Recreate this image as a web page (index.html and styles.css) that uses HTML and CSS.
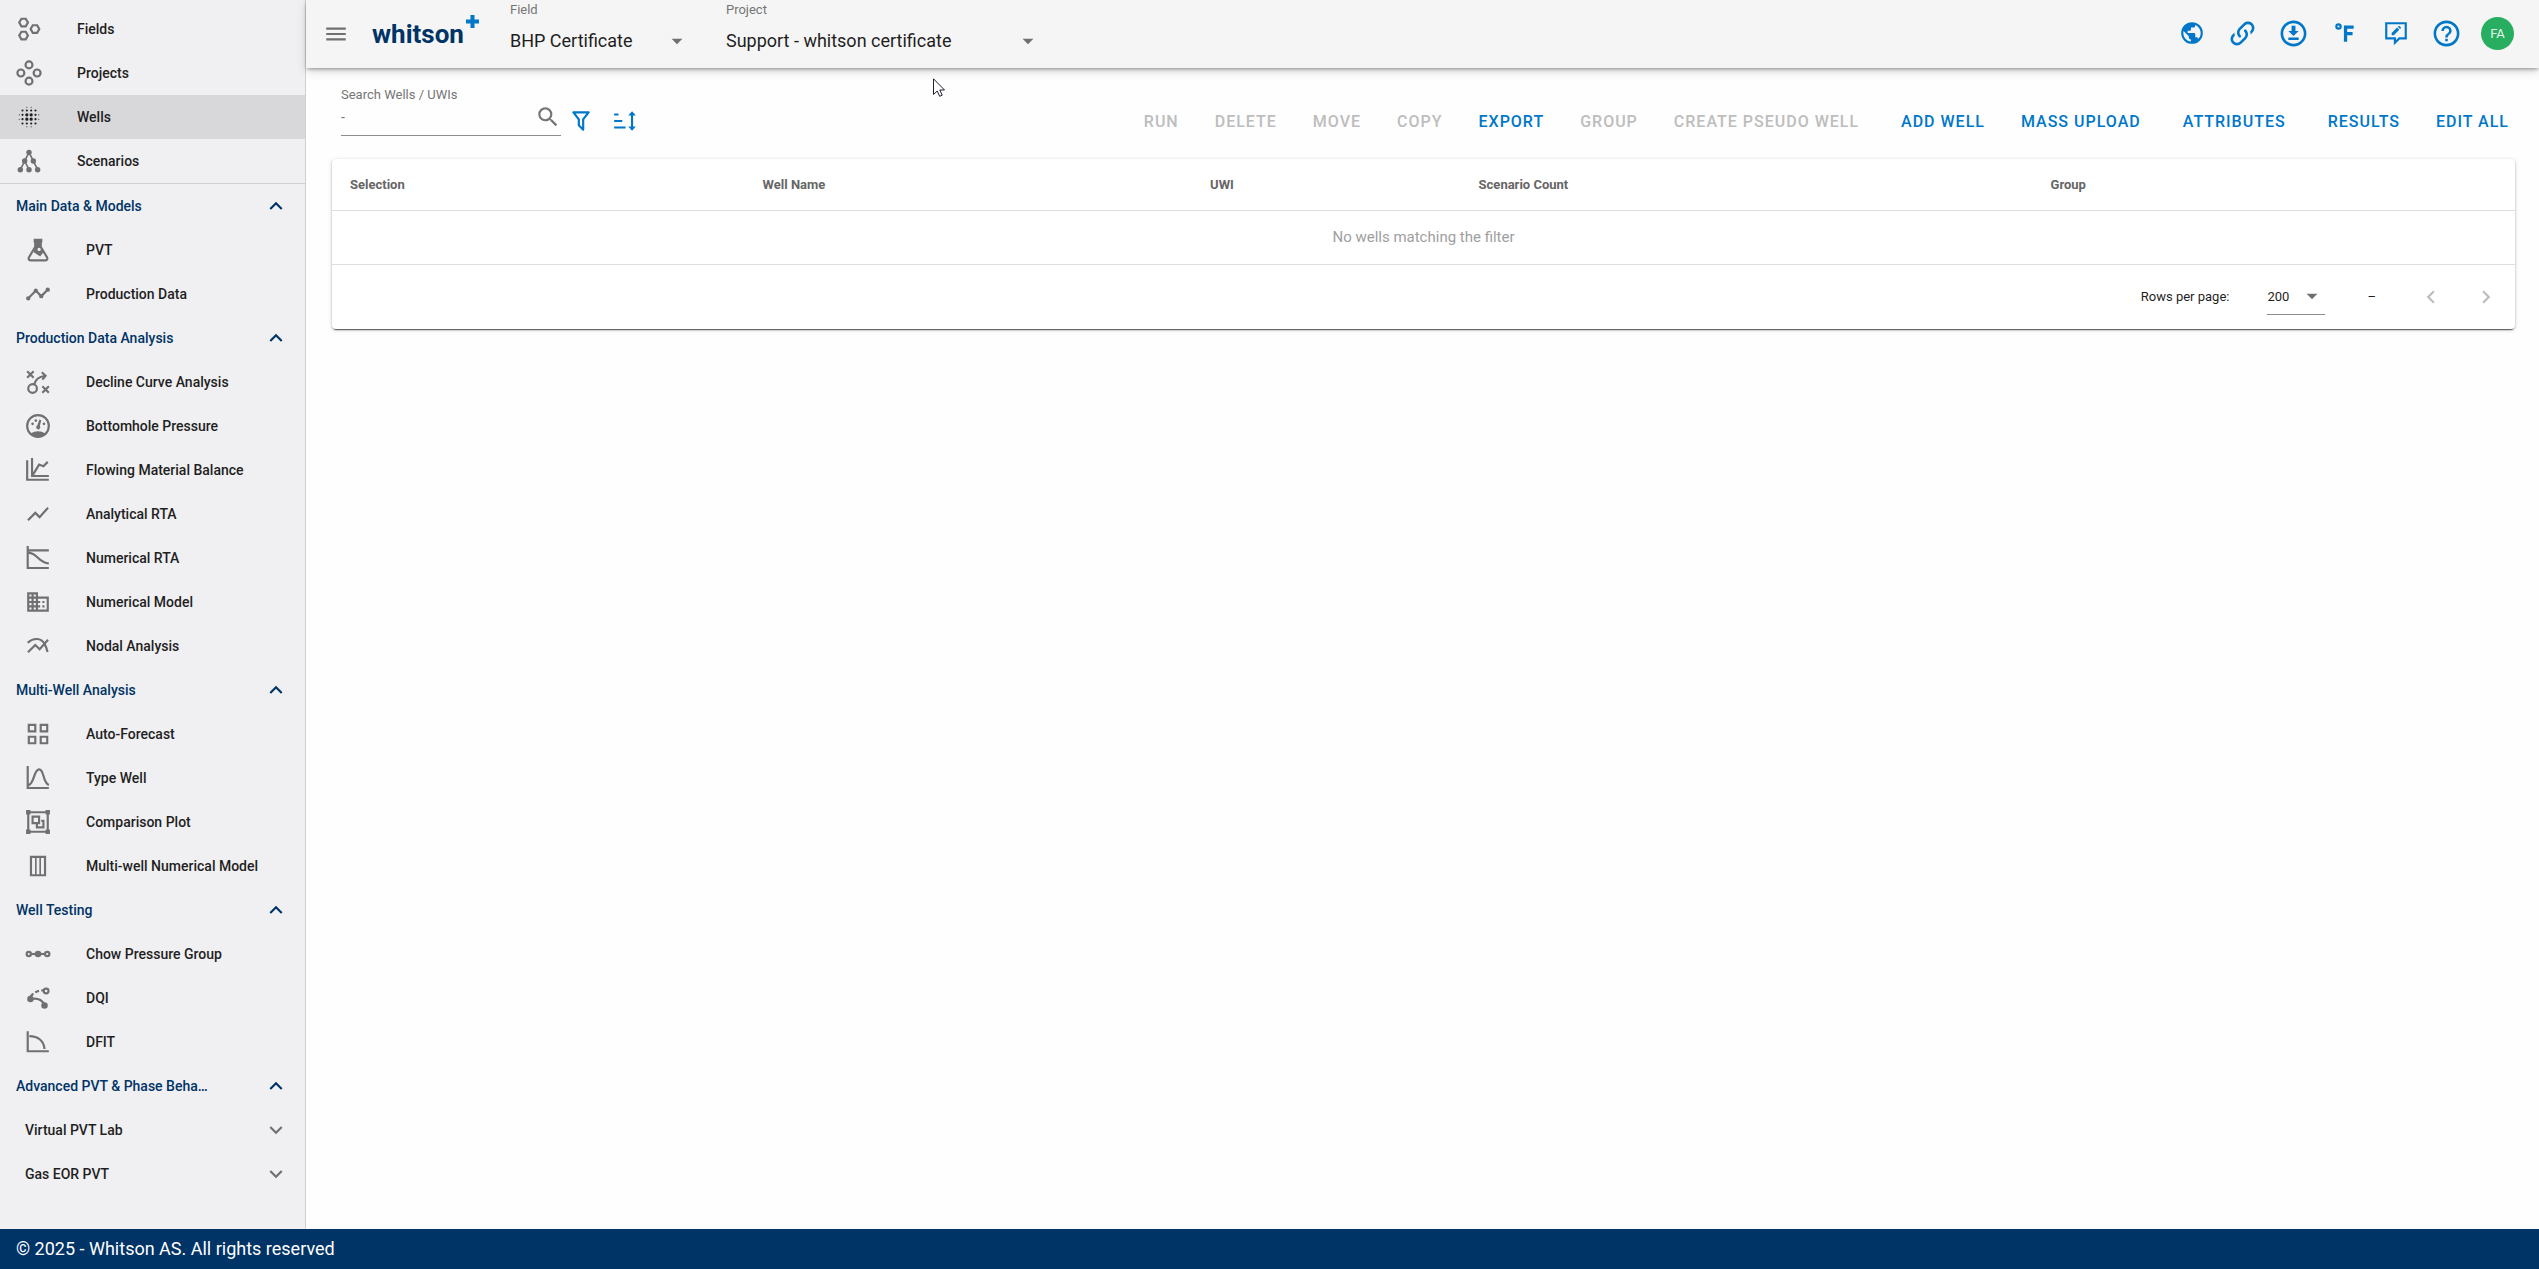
FILE: index.html
```html
<!DOCTYPE html>
<html lang="en">
<head>
    <meta charset="UTF-8">
    <meta name="viewport" content="width=device-width, initial-scale=1.0">
    <title>whitson+ | Wells</title>
    <link rel="stylesheet" href="styles.css">
</head>
<body>

<!-- Shared icons -->
<svg class="sprite" width="0" height="0" aria-hidden="true">
    <symbol id="up" viewBox="0 0 24 24"><path d="M7.41,15.41L12,10.83L16.59,15.41L18,14L12,8L6,14L7.41,15.41Z"/></symbol>
    <symbol id="down" viewBox="0 0 24 24"><path d="M7.41,8.59L12,13.17L16.59,8.59L18,10L12,16L6,10L7.41,8.59Z"/></symbol>
    <symbol id="caret" viewBox="0 0 24 24"><path d="M7,10L12,15L17,10H7Z"/></symbol>
</svg>

<div class="layout">
    <aside class="sidebar">
        <nav class="nav-main">
            <a class="nav-item" href="#">
                <svg class="icon" viewBox="0 0 24 24"><g class="line"><path d="M5,2.500H9L11,6L9,9.500H5L3,6Z"/><path d="M5,14.500H9L11,18L9,21.500H5L3,18Z"/><path d="M15.500,8.500H19.500L21.500,12L19.500,15.500H15.500L13.500,12Z"/></g></svg>
                Fields
            </a>
            <a class="nav-item" href="#">
                <svg class="icon" viewBox="0 0 24 24"><g class="line"><circle cx="12" cy="4.500" r="3.200"/><circle cx="12" cy="19.500" r="3.200"/><circle cx="4.500" cy="12" r="3.200"/><circle cx="19.500" cy="12" r="3.200"/></g></svg>
                Projects
            </a>
            <a class="nav-item active" href="#">
                <svg class="icon" viewBox="0 0 24 24"><path d="M14,8.5A1.5,1.5 0 0,0 12.500,10A1.5,1.5 0 0,0 14,11.5A1.5,1.5 0 0,0 15.500,10A1.5,1.5 0 0,0 14,8.5M14,12.500A1.5,1.5 0 0,0 12.500,14A1.5,1.5 0 0,0 14,15.500A1.5,1.5 0 0,0 15.500,14A1.5,1.5 0 0,0 14,12.500M10,17A1,1 0 0,0 9,18A1,1 0 0,0 10,19A1,1 0 0,0 11,18A1,1 0 0,0 10,17M10,8.5A1.5,1.5 0 0,0 8.500,10A1.5,1.5 0 0,0 10,11.500A1.5,1.5 0 0,0 11.500,10A1.5,1.5 0 0,0 10,8.500M14,20.500A0.5,0.5 0 0,0 13.500,21A0.5,0.5 0 0,0 14,21.500A0.5,0.5 0 0,0 14.500,21A0.5,0.5 0 0,0 14,20.500M14,17A1,1 0 0,0 13,18A1,1 0 0,0 14,19A1,1 0 0,0 15,18A1,1 0 0,0 14,17M21,13.500A0.5,0.5 0 0,0 20.500,14A0.5,0.5 0 0,0 21,14.500A0.5,0.5 0 0,0 21.500,14A0.5,0.5 0 0,0 21,13.500M18,5A1,1 0 0,0 17,6A1,1 0 0,0 18,7A1,1 0 0,0 19,6A1,1 0 0,0 18,5M18,9A1,1 0 0,0 17,10A1,1 0 0,0 18,11A1,1 0 0,0 19,10A1,1 0 0,0 18,9M18,17A1,1 0 0,0 17,18A1,1 0 0,0 18,19A1,1 0 0,0 19,18A1,1 0 0,0 18,17M18,13A1,1 0 0,0 17,14A1,1 0 0,0 18,15A1,1 0 0,0 19,14A1,1 0 0,0 18,13M10,12.500A1.5,1.5 0 0,0 8.500,14A1.5,1.5 0 0,0 10,15.500A1.5,1.5 0 0,0 11.500,14A1.5,1.5 0 0,0 10,12.500M10,7A1,1 0 0,0 11,6A1,1 0 0,0 10,5A1,1 0 0,0 9,6A1,1 0 0,0 10,7M10,3.500A0.5,0.5 0 0,0 10.500,3A0.5,0.5 0 0,0 10,2.500A0.5,0.5 0 0,0 9.500,3A0.5,0.5 0 0,0 10,3.500M10,20.500A0.5,0.5 0 0,0 9.500,21A0.5,0.5 0 0,0 10,21.500A0.5,0.5 0 0,0 10.500,21A0.5,0.5 0 0,0 10,20.500M3,13.500A0.5,0.5 0 0,0 2.500,14A0.5,0.5 0 0,0 3,14.500A0.5,0.5 0 0,0 3.500,14A0.5,0.5 0 0,0 3,13.500M14,3.500A0.5,0.5 0 0,0 14.500,3A0.5,0.5 0 0,0 14,2.500A0.5,0.5 0 0,0 13.500,3A0.5,0.5 0 0,0 14,3.500M14,7A1,1 0 0,0 15,6A1,1 0 0,0 14,5A1,1 0 0,0 13,6A1,1 0 0,0 14,7M21,10.500A0.5,0.5 0 0,0 21.500,10A0.5,0.5 0 0,0 21,9.500A0.5,0.5 0 0,0 20.500,10A0.5,0.5 0 0,0 21,10.500M6,5A1,1 0 0,0 5,6A1,1 0 0,0 6,7A1,1 0 0,0 7,6A1,1 0 0,0 6,5M3,9.500A0.5,0.5 0 0,0 2.500,10A0.5,0.5 0 0,0 3,10.500A0.5,0.5 0 0,0 3.500,10A0.5,0.5 0 0,0 3,9.500M6,9A1,1 0 0,0 5,10A1,1 0 0,0 6,11A1,1 0 0,0 7,10A1,1 0 0,0 6,9M6,17A1,1 0 0,0 5,18A1,1 0 0,0 6,19A1,1 0 0,0 7,18A1,1 0 0,0 6,17M6,13A1,1 0 0,0 5,14A1,1 0 0,0 6,15A1,1 0 0,0 7,14A1,1 0 0,0 6,13Z"/></svg>
                Wells
            </a>
            <a class="nav-item" href="#">
                <svg class="icon" viewBox="0 0 24 24"><circle cx="12" cy="4" r="2.500"/><circle cx="8" cy="12" r="2.500"/><circle cx="16" cy="12" r="2.500"/><circle cx="4" cy="20" r="2.500"/><circle cx="12" cy="20" r="2.500"/><circle cx="20" cy="20" r="2.500"/><path class="line thin" d="M4,20L12,4L20,20M8,12L12,20"/></svg>
                Scenarios
            </a>
        </nav>

        <nav class="nav-groups">
            <button class="group-title" type="button"><span>Main Data &amp; Models</span><svg class="icon" viewBox="0 0 24 24"><use href="#up"/></svg></button>
            <a class="nav-item sub" href="#">
                <svg class="icon" viewBox="0 0 24 24"><path d="M8,1.500H16V5H15V9L13.500,17L9,14V5H8Z"/><path class="line" d="M9.500,4V9L3.600,18.800Q2.800,21.500 5,21.500H19Q21.200,21.500 20.400,18.800L14.500,9V4"/><path d="M9,10H15L17,14L14,18L8,14Z"/><circle class="hole" cx="13" cy="11.500" r="1.500"/></svg>
                PVT
            </a>
            <a class="nav-item sub" href="#">
                <svg class="icon" viewBox="0 0 24 24"><path d="M3,14L3.500,14.070L8.070,9.500C7.890,8.850 8.060,8.110 8.590,7.590C9.370,6.800 10.630,6.800 11.410,7.590C11.940,8.110 12.110,8.850 11.930,9.500L14.500,12.070L15,12C15.180,12 15.350,12 15.500,12.070L19.070,8.500C19,8.350 19,8.180 19,8A2,2 0 0,1 21,6A2,2 0 0,1 23,8A2,2 0 0,1 21,10C20.820,10 20.650,10 20.500,9.930L16.930,13.500C17,13.650 17,13.820 17,14A2,2 0 0,1 15,16A2,2 0 0,1 13,14L13.070,13.500L10.500,10.930C10.180,11 9.820,11 9.500,10.930L4.930,15.500L5,16A2,2 0 0,1 3,18A2,2 0 0,1 1,16A2,2 0 0,1 3,14Z"/></svg>
                Production Data
            </a>

            <button class="group-title" type="button"><span>Production Data Analysis</span><svg class="icon" viewBox="0 0 24 24"><use href="#up"/></svg></button>
            <a class="nav-item sub" href="#">
                <svg class="icon" viewBox="0 0 24 24"><g class="line"><path d="M2,2L8,8M8,2L2,8M16,16L22,22M22,16L16,22"/><circle cx="7" cy="18" r="4"/><path d="M8.500,14C10,9 13,7 18,6.500M15.500,3L19,6.300L16,9.800"/></g></svg>
                Decline Curve Analysis
            </a>
            <a class="nav-item sub" href="#">
                <svg class="icon" viewBox="0 0 24 24"><circle class="line" cx="12" cy="12" r="10"/><path d="M5,19Q12,14.500 19,19Q16,22 12,22T5,19Z"/><path d="M13.300,6L15,6.600L13.700,12A1.900,1.900 0 1 1 11.300,11.500Z"/><circle cx="7" cy="10" r="1.200"/><circle cx="17.500" cy="10" r="1.200"/><circle cx="10" cy="7" r="1.200"/></svg>
                Bottomhole Pressure
            </a>
            <a class="nav-item sub" href="#">
                <svg class="icon" viewBox="0 0 24 24"><path class="line" d="M2,3V21H22M6.500,1V17.500H22M7,17L13,7L17,8.500L21,4.500"/></svg>
                Flowing Material Balance
            </a>
            <a class="nav-item sub" href="#">
                <svg class="icon" viewBox="0 0 24 24"><path d="M3.500,18.490L9.500,12.480L13.500,16.480L22,6.920L20.590,5.510L13.500,13.480L9.500,9.480L2,16.990L3.500,18.490Z"/></svg>
                Analytical RTA
            </a>
            <a class="nav-item sub" href="#">
                <svg class="icon" viewBox="0 0 24 24"><path class="line" d="M2.500,1V21.200H22M2.500,5H22M3,7C12,7.500 12,16.500 22,17"/></svg>
                Numerical RTA
            </a>
            <a class="nav-item sub" href="#">
                <svg class="icon" viewBox="0 0 24 24"><path class="line" d="M3,4H11V20H3ZM11,8H21V20H11M7,4V20M3,8H11M3,12H14M3,16H14"/><path d="M16,11H18V13H16ZM16,15H18V17H16Z"/></svg>
                Numerical Model
            </a>
            <a class="nav-item sub" href="#">
                <svg class="icon" viewBox="0 0 24 24"><path class="line" d="M2.700,17.800L9.500,11L13.500,15L21.300,6.200M2.500,9C8,4 15,4.500 18,10Q19.800,13 20.800,17.500"/></svg>
                Nodal Analysis
            </a>

            <button class="group-title" type="button"><span>Multi-Well Analysis</span><svg class="icon" viewBox="0 0 24 24"><use href="#up"/></svg></button>
            <a class="nav-item sub" href="#">
                <svg class="icon" viewBox="0 0 24 24"><path class="line" d="M3.500,3.500H9.500V9.500H3.500ZM14.500,3.500H20.500V9.500H14.500ZM3.500,14.500H9.500V20.500H3.500ZM14.500,14.500H20.500V20.500H14.500Z"/></svg>
                Auto-Forecast
            </a>
            <a class="nav-item sub" href="#">
                <svg class="icon" viewBox="0 0 24 24"><path class="line" d="M2.500,1V21.200H22M3,19C9,17 8,4 13,4S16,16 22,18.500"/></svg>
                Type Well
            </a>
            <a class="nav-item sub" href="#">
                <svg class="icon" viewBox="0 0 24 24"><path class="line" d="M3,3H21V21H3ZM7,7H13V13H7ZM15,11H17V17H11V14"/><path d="M1,1H5V5H1ZM19,1H23V5H19ZM1,19H5V23H1ZM19,19H23V23H19Z"/></svg>
                Comparison Plot
            </a>
            <a class="nav-item sub" href="#">
                <svg class="icon" viewBox="0 0 24 24"><path class="line" d="M5.500,3.500H18.500V20.500H5.500Z"/><path class="line thin" d="M10,3V21M14,3V21"/></svg>
                Multi-well Numerical Model
            </a>

            <button class="group-title" type="button"><span>Well Testing</span><svg class="icon" viewBox="0 0 24 24"><use href="#up"/></svg></button>
            <a class="nav-item sub" href="#">
                <svg class="icon" viewBox="0 0 24 24"><circle cx="12" cy="12" r="3"/><g class="line"><circle cx="3.500" cy="12" r="2"/><circle cx="20.500" cy="12" r="2"/><path d="M6,12H18"/></g></svg>
                Chow Pressure Group
            </a>
            <a class="nav-item sub" href="#">
                <svg class="icon" viewBox="0 0 24 24"><circle cx="5" cy="13" r="3"/><circle cx="18" cy="19" r="3"/><g class="line"><circle cx="19.500" cy="5.500" r="2.200"/><path d="M5,13Q14,11 18,18"/><path stroke-dasharray="4 2" d="M5,11Q9,5 17,5"/></g></svg>
                DQI
            </a>
            <a class="nav-item sub" href="#">
                <svg class="icon" viewBox="0 0 24 24"><path class="line" d="M2.500,2V20.500H22M4,6.500C12,6.500 17.500,11 18,18.500"/></svg>
                DFIT
            </a>

            <button class="group-title" type="button"><span>Advanced PVT &amp; Phase Beha…</span><svg class="icon" viewBox="0 0 24 24"><use href="#up"/></svg></button>
            <button class="group-title nested" type="button"><span>Virtual PVT Lab</span><svg class="icon" viewBox="0 0 24 24"><use href="#down"/></svg></button>
            <button class="group-title nested" type="button"><span>Gas EOR PVT</span><svg class="icon" viewBox="0 0 24 24"><use href="#down"/></svg></button>
        </nav>
    </aside>

    <div class="content">
        <header class="topbar">
            <button class="menu-btn" type="button" aria-label="Menu">
                <svg class="icon" viewBox="0 0 24 24"><path d="M3,6H21V8H3V6M3,11H21V13H3V11M3,16H21V18H3V16Z"/></svg>
            </button>
            <a class="logo" href="#">whitson<svg class="logo-plus" viewBox="0 0 13 13"><path d="M4.500,0H8.500V4.500H13V8.500H8.500V13H4.500V8.500H0V4.500H4.500Z"/></svg></a>

            <div class="picker">
                <label for="field">Field</label>
                <div class="select field-select">
                    <select id="field"><option>BHP Certificate</option></select>
                    <svg class="icon" viewBox="0 0 24 24"><use href="#caret"/></svg>
                </div>
            </div>
            <div class="picker">
                <label for="project">Project</label>
                <div class="select project-select">
                    <select id="project"><option>Support - whitson certificate</option></select>
                    <svg class="icon" viewBox="0 0 24 24"><use href="#caret"/></svg>
                </div>
            </div>

            <div class="tools">
                <button type="button" aria-label="Language"><svg class="icon" viewBox="0 0 24 24"><path d="M17.900,17.390C17.640,16.590 16.890,16 16,16H15V13A1,1 0 0,0 14,12H8V10H10A1,1 0 0,0 11,9V7H13A2,2 0 0,0 15,5V4.590C17.930,5.770 20,8.640 20,12C20,14.080 19.200,15.970 17.900,17.390M11,19.930C7.050,19.440 4,16.080 4,12C4,11.380 4.080,10.780 4.210,10.210L9,15V16A2,2 0 0,0 11,18M12,2A10,10 0 0,0 2,12A10,10 0 0,0 12,22A10,10 0 0,0 22,12A10,10 0 0,0 12,2Z"/></svg></button>
                <button type="button" aria-label="Copy link"><svg class="icon large" viewBox="0 0 24 24"><path d="M10.590,13.410C11,13.800 11,14.440 10.590,14.830C10.200,15.220 9.560,15.220 9.170,14.830C7.220,12.880 7.220,9.710 9.170,7.760L12.710,4.220C14.660,2.270 17.830,2.270 19.780,4.220C21.730,6.170 21.730,9.340 19.780,11.290L18.290,12.780C18.300,11.960 18.170,11.140 17.890,10.360L18.360,9.880C19.540,8.710 19.540,6.810 18.360,5.640C17.190,4.460 15.290,4.460 14.120,5.640L10.590,9.170C9.410,10.340 9.410,12.240 10.590,13.410M13.410,9.170C13.800,8.780 14.440,8.780 14.830,9.170C16.780,11.120 16.780,14.290 14.830,16.240L11.290,19.780C9.340,21.730 6.170,21.730 4.220,19.780C2.270,17.830 2.270,14.660 4.220,12.710L5.710,11.220C5.700,12.040 5.830,12.860 6.110,13.650L5.640,14.120C4.460,15.290 4.460,17.190 5.640,18.360C6.810,19.540 8.710,19.540 9.880,18.360L13.410,14.830C14.590,13.660 14.590,11.760 13.410,10.590C13,10.200 13,9.560 13.410,9.170Z"/></svg></button>
                <button type="button" aria-label="Download"><svg class="icon large" viewBox="0 0 24 24"><path d="M8,17V15H16V17H8M16,10L12,14L8,10H10.500V6H13.500V10H16M12,2C17.500,2 22,6.500 22,12C22,17.500 17.500,22 12,22C6.500,22 2,17.500 2,12C2,6.500 6.500,2 12,2M12,4C7.580,4 4,7.580 4,12C4,16.420 7.580,20 12,20C16.420,20 20,16.420 20,12C20,7.580 16.420,4 12,4Z"/></svg></button>
                <button type="button" aria-label="Units"><svg class="icon" viewBox="0 0 24 24"><path d="M11,20V5H20V8H14V11H19V14H14V20H11M6,3A3,3 0 0,1 9,6A3,3 0 0,1 6,9A3,3 0 0,1 3,6A3,3 0 0,1 6,3M6,5A1,1 0 0,0 5,6A1,1 0 0,0 6,7A1,1 0 0,0 7,6A1,1 0 0,0 6,5Z"/></svg></button>
                <button type="button" aria-label="Feedback"><svg class="icon" viewBox="0 0 24 24"><path class="line" d="M3,3H21V17H15L11,21V17H3Z"/><path d="M8,14V12L13,7L15,9L10,14ZM13.700,6.300L14.800,5.200L16.800,7.200L15.700,8.300Z"/></svg></button>
                <button type="button" aria-label="Help"><svg class="icon large" viewBox="0 0 24 24"><path d="M11,18H13V16H11V18M12,2A10,10 0 0,0 2,12A10,10 0 0,0 12,22A10,10 0 0,0 22,12A10,10 0 0,0 12,2M12,20C7.590,20 4,16.410 4,12C4,7.590 7.590,4 12,4C16.410,4 20,7.590 20,12C20,16.410 16.410,20 12,20M12,6A4,4 0 0,0 8,10H10A2,2 0 0,1 12,8A2,2 0 0,1 14,10C14,12 11,11.750 11,15H13C13,12.750 16,12.500 16,10A4,4 0 0,0 12,6Z"/></svg></button>
                <button type="button" aria-label="Account"><span class="avatar">FA</span></button>
            </div>
        </header>

        <main>
            <div class="toolbar">
                <div class="search">
                    <label for="search">Search Wells / UWIs</label>
                    <div class="search-row">
                        <input type="text" id="search" placeholder="-">
                        <svg class="icon" viewBox="0 0 24 24"><path d="M9.500,3A6.500,6.500 0 0,1 16,9.500C16,11.110 15.410,12.590 14.440,13.730L14.710,14H15.500L20.500,19L19,20.500L14,15.500V14.710L13.730,14.440C12.590,15.410 11.110,16 9.500,16A6.500,6.500 0 0,1 3,9.500A6.500,6.500 0 0,1 9.500,3M9.500,5C7,5 5,7 5,9.500C5,12 7,14 9.500,14C12,14 14,12 14,9.500C14,7 12,5 9.500,5Z"/></svg>
                    </div>
                </div>
                <div class="filters">
                    <button type="button" aria-label="Filter"><svg class="icon" viewBox="0 0 24 24"><path d="M15,19.880C15.040,20.180 14.940,20.500 14.710,20.710C14.320,21.100 13.690,21.100 13.300,20.710L9.290,16.700C9.060,16.470 8.960,16.160 9,15.870V10.750L4.210,4.620C3.870,4.190 3.950,3.560 4.380,3.220C4.570,3.080 4.780,3 5,3H19C19.220,3 19.430,3.080 19.620,3.220C20.050,3.560 20.130,4.190 19.790,4.620L15,10.750V19.880M7.040,5L11,10.060V15.580L13,17.580V10.050L16.960,5H7.040Z"/></svg></button>
                    <button type="button" aria-label="Sort"><svg class="icon" viewBox="0 0 24 24"><path d="M2,5H6V7H2ZM2,11H9.500V13H2ZM2,17H12.500V19H2ZM19,17H22L18.500,21L15,17H17.500V7H15L18.500,3L22,7H19.500V17Z"/></svg></button>
                </div>
                <div class="actions">
                    <div class="action-set">
                        <button type="button" disabled>RUN</button>
                        <button type="button" disabled>DELETE</button>
                        <button type="button" disabled>MOVE</button>
                        <button type="button" disabled>COPY</button>
                        <button type="button">EXPORT</button>
                        <button type="button" disabled>GROUP</button>
                        <button type="button" disabled>CREATE PSEUDO WELL</button>
                    </div>
                    <div class="action-set">
                        <button type="button">ADD WELL</button>
                        <button type="button">MASS UPLOAD</button>
                    </div>
                    <div class="action-set">
                        <button type="button">ATTRIBUTES</button>
                    </div>
                    <div class="action-set">
                        <button type="button">RESULTS</button>
                        <button type="button">EDIT ALL</button>
                    </div>
                </div>
            </div>

            <div class="card">
                <table>
                    <thead>
                        <tr>
                            <th class="col-selection">Selection</th>
                            <th class="col-name">Well Name</th>
                            <th class="col-uwi">UWI</th>
                            <th class="col-count">Scenario Count</th>
                            <th>Group</th>
                        </tr>
                    </thead>
                    <tbody>
                        <tr><td colspan="5">No wells matching the filter</td></tr>
                    </tbody>
                </table>
                <div class="pagination">
                    <label for="rows">Rows per page:</label>
                    <div class="select rows-select">
                        <select id="rows"><option>200</option></select>
                        <svg class="icon" viewBox="0 0 24 24"><use href="#caret"/></svg>
                    </div>
                    <span class="range">–</span>
                    <button type="button" aria-label="Previous page" disabled><svg class="icon" viewBox="0 0 24 24"><path d="M15.410,16.580L10.830,12L15.410,7.410L14,6L8,12L14,18L15.410,16.580Z"/></svg></button>
                    <button type="button" aria-label="Next page" disabled><svg class="icon" viewBox="0 0 24 24"><path d="M8.590,16.580L13.170,12L8.590,7.410L10,6L16,12L10,18L8.590,16.580Z"/></svg></button>
                </div>
            </div>
        </main>
    </div>
</div>

<footer>© 2025 - Whitson AS. All rights reserved</footer>

<svg class="cursor" viewBox="0 0 12 19"><path d="M0.500,0.800V16.500L4.200,13L6.700,18.300L9.200,17.200L6.800,12H11.500Z"/></svg>

</body>
</html>
```

FILE: styles.css
```css
* {
    box-sizing: border-box;
}

body {
    margin: 0;
    min-height: 100vh;
    display: flex;
    flex-direction: column;
    font-family: Roboto, "Liberation Sans", sans-serif;
    font-size: 14px;
    color: #1f1f1f;
    background-color: #fefefe;
}

button, input, select {
    font-family: inherit;
    border: none;
    background: none;
    padding: 0;
    margin: 0;
}

button {
    cursor: pointer;
}

a {
    text-decoration: none;
    color: inherit;
}

.sprite {
    position: absolute;
}

.icon {
    width: 26px;
    height: 26px;
    flex-shrink: 0;
    fill: currentColor;
}

.icon.large {
    width: 31px;
    height: 31px;
}

.line {
    fill: none;
    stroke: currentColor;
    stroke-width: 2;
}

.line.thin {
    stroke-width: 1.5;
}

.hole {
    fill: #f0f0f2;
}

.layout {
    display: flex;
    flex: 1;
}

/* Sidebar */
.sidebar {
    width: 306px;
    flex-shrink: 0;
    background-color: #f0f0f2;
    border-right: 1px solid #d0d0d2;
    font-weight: 500;
}

.nav-main {
    padding-top: 7px;
    border-bottom: 1px solid #d0d0d2;
}

.nav-item {
    display: flex;
    align-items: center;
    gap: 35px;
    height: 44px;
    padding: 0 0 1px 16px;
}

.nav-item.sub {
    padding-left: 25px;
}

.nav-item .icon {
    color: #707072;
}

.nav-item.active {
    background-color: #d8d8da;
}

.nav-item.active .icon {
    color: #1f1f1f;
}

.group-title {
    display: flex;
    justify-content: space-between;
    align-items: center;
    width: 100%;
    height: 44px;
    padding: 0 16px 1px 16px;
    font-size: 14px;
    font-weight: 500;
    color: #003366;
}

.group-title.nested {
    padding-left: 25px;
    color: #1f1f1f;
}

.group-title.nested .icon {
    color: #707072;
}

/* Top bar */
.content {
    flex: 1;
    min-width: 0;
}

.topbar {
    display: flex;
    align-items: center;
    height: 68px;
    padding: 0 16px 0 17px;
    background-color: #f5f5f5;
    box-shadow: 0 2px 4px -1px rgba(0, 0, 0, 0.4), 0 4px 10px rgba(0, 0, 0, 0.12);
}

.menu-btn {
    display: flex;
    color: #707070;
}

.logo {
    display: flex;
    align-items: center;
    margin-left: 23px;
    font-size: 26px;
    font-weight: 700;
    color: #003366;
}

.logo-plus {
    width: 13px;
    height: 13px;
    margin-left: 2px;
    margin-bottom: 26px;
    fill: #0077c8;
}

.picker {
    display: flex;
    flex-direction: column;
    gap: 10px;
    margin: 0 0 13px 31px;
}

.picker + .picker {
    margin-left: 36px;
}

.picker label, .search label {
    font-size: 13px;
    line-height: 16px;
    color: #757575;
}

.select {
    display: grid;
    align-items: center;
}

.select select, .select .icon {
    grid-area: 1 / 1;
}

.select select {
    appearance: none;
    width: 100%;
    color: #1f1f1f;
}

.select .icon {
    justify-self: end;
    color: #707070;
    pointer-events: none;
}

.picker select {
    font-size: 18px;
    line-height: 24px;
}

.field-select {
    width: 180px;
}

.project-select {
    width: 315px;
}

.tools {
    display: flex;
    margin-left: auto;
    margin-bottom: 2px;
}

.tools button {
    display: flex;
    align-items: center;
    justify-content: center;
    width: 51px;
    height: 36px;
    color: #0077c8;
}

.avatar {
    width: 33px;
    height: 33px;
    border-radius: 50%;
    background-color: #27ae60;
    color: #e8f5ec;
    font-size: 13px;
    line-height: 33px;
}

/* Wells page */
main {
    padding: 18px 24px 0 26px;
}

.toolbar {
    display: flex;
    align-items: flex-end;
    height: 55px;
    padding-left: 9px;
}

.search {
    align-self: flex-start;
    width: 220px;
    border-bottom: 1px solid #8c8c8c;
}

.search-row {
    display: flex;
    align-items: center;
    height: 32px;
    padding-bottom: 4px;
}

.search input {
    flex: 1;
    min-width: 0;
    font-size: 14px;
    outline: none;
}

.search .icon {
    color: #757575;
}

.filters {
    display: flex;
    align-items: center;
    gap: 18px;
    height: 40px;
    margin-left: 7px;
}

.filters button {
    display: flex;
    color: #0077c8;
}

.actions {
    display: flex;
    gap: 6px;
    margin-left: auto;
    margin-right: -12px;
}

.action-set {
    display: flex;
}

.actions button {
    height: 40px;
    padding: 0 18px;
    font-size: 16px;
    font-weight: 500;
    letter-spacing: 1px;
    color: #0077c8;
}

.actions button:disabled {
    color: #bdbdbd;
}

.card {
    margin-top: 18px;
    border-radius: 4px;
    background-color: #fff;
    box-shadow: 0 3px 1px -2px rgba(0, 0, 0, 0.5), 0 1px 2px rgba(0, 0, 0, 0.3), 0 1px 5px rgba(0, 0, 0, 0.12);
}

table {
    width: 100%;
    table-layout: fixed;
    border-collapse: collapse;
}

th, td {
    padding: 0 18px;
    border-bottom: 1px solid #dedede;
}

th {
    height: 51px;
    font-size: 13px;
    text-align: left;
    color: #666;
}

td {
    height: 54px;
    font-size: 15px;
    text-align: center;
    color: #9e9e9e;
}

.col-selection {
    width: 18.9%;
}

.col-name {
    width: 20.5%;
}

.col-uwi {
    width: 12.3%;
}

.col-count {
    width: 26.2%;
}

.pagination {
    display: flex;
    align-items: center;
    justify-content: flex-end;
    height: 64px;
    padding-right: 16px;
    font-size: 13px;
}

.rows-select {
    width: 58px;
    height: 36px;
    margin-left: 38px;
    border-bottom: 1px solid #8c8c8c;
}

.rows-select select {
    font-size: 13px;
    font-weight: 400;
}

.range {
    margin: 0 42px;
}

.pagination button {
    display: flex;
    color: #bdbdbd;
}

.pagination button + button {
    margin-left: 29px;
}

footer {
    height: 40px;
    padding-left: 16px;
    background-color: #003366;
    color: #fff;
    font-size: 18px;
    line-height: 40px;
}

/* Mouse pointer over the page */
.cursor {
    position: absolute;
    left: 933px;
    top: 78px;
    width: 12px;
    height: 19px;
    fill: #fff;
    stroke: #1f1f2f;
}
```
